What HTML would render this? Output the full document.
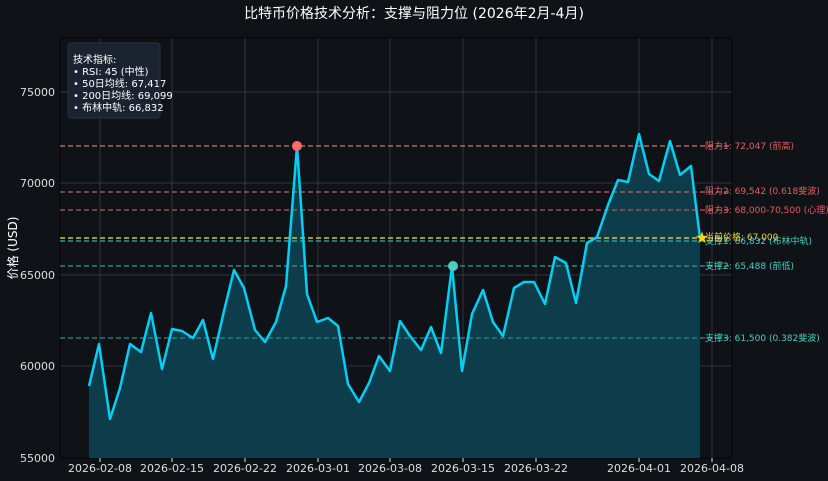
<!DOCTYPE html>
<html><head><meta charset="utf-8"><style>
html,body{margin:0;padding:0;background:#0f1317;}
svg{display:block;font-family:"DejaVu Sans","Noto Sans CJK SC",sans-serif;}
</style></head><body>
<svg width="828" height="481" viewBox="0 0 828 481" xmlns="http://www.w3.org/2000/svg">
<rect width="828" height="481" fill="#0f1317"/>
<text x="414" y="18" fill="#fff" font-size="14" text-anchor="middle">比特币价格技术分析：支撑与阻力位 (2026年2月-4月)</text>
<rect x="60" y="38" width="672" height="420" fill="#0f1317" stroke="#000" stroke-width="1"/>
<g stroke="#3a4045" stroke-width="0.8">
<line x1="100" y1="38" x2="100" y2="458"/><line x1="172" y1="38" x2="172" y2="458"/><line x1="245" y1="38" x2="245" y2="458"/><line x1="318" y1="38" x2="318" y2="458"/><line x1="390" y1="38" x2="390" y2="458"/><line x1="463" y1="38" x2="463" y2="458"/><line x1="536" y1="38" x2="536" y2="458"/><line x1="639" y1="38" x2="639" y2="458"/><line x1="712" y1="38" x2="712" y2="458"/>
<line x1="60" y1="92" x2="732" y2="92"/><line x1="60" y1="183" x2="732" y2="183"/><line x1="60" y1="275" x2="732" y2="275"/><line x1="60" y1="366" x2="732" y2="366"/>
</g>
<polygon fill="#0d3d4a" points="89,458 89,386 99,344 110,419 120,388 130,344 141,352 151,313 162,369 172,329 182,331 193,338 203,320 213,359 224,311 234,270 244,288 255,330 265,342 276,322 286,286 297,146 307,294 317,322 328,318 338,326 348,384 359,402 369,383 379,356 390,371 400,321 410,336 421,350 431,327 441,353 452,266 462,371 472,314 483,290 493,322 503,336 514,288 524,282 534,282 545,304 555,257 566,263 576,303 587,243 597,237 608,205 618,180 628,182 639,134 649,174 659,181 670,141 680,175 691,166 700,238 700,458"/>
<g stroke-dasharray="5,3" stroke-width="1.3">
<line x1="60" y1="146" x2="732" y2="146" stroke="#e07070"/>
<line x1="60" y1="192" x2="732" y2="192" stroke="#c86060"/>
<line x1="60" y1="210" x2="732" y2="210" stroke="#c85050"/>
<line x1="60" y1="238" x2="732" y2="238" stroke="#f0e060"/>
<line x1="60" y1="241" x2="732" y2="241" stroke="#4aa"/>
<line x1="60" y1="266" x2="732" y2="266" stroke="#3a9a90"/>
<line x1="60" y1="338" x2="732" y2="338" stroke="#2f8a90"/>
</g>
<polyline fill="none" stroke="#00d0f5" stroke-width="2.5" stroke-linejoin="round" points="89,386 99,344 110,419 120,388 130,344 141,352 151,313 162,369 172,329 182,331 193,338 203,320 213,359 224,311 234,270 244,288 255,330 265,342 276,322 286,286 297,146 307,294 317,322 328,318 338,326 348,384 359,402 369,383 379,356 390,371 400,321 410,336 421,350 431,327 441,353 452,266 462,371 472,314 483,290 493,322 503,336 514,288 524,282 534,282 545,304 555,257 566,263 576,303 587,243 597,237 608,205 618,180 628,182 639,134 649,174 659,181 670,141 680,175 691,166 700,238"/>
<circle cx="297" cy="146" r="5" fill="#ff6b6b"/>
<circle cx="453" cy="266" r="5" fill="#4ecdc4"/>
<text x="702" y="243" fill="#ffd700" font-size="16" text-anchor="middle">★</text>
<g font-size="9">
<text x="705" y="149" fill="#e06060">阻力1: 72,047 (前高)</text>
<text x="705" y="194" fill="#e06060">阻力2: 69,542 (0.618斐波)</text>
<text x="705" y="213" fill="#e06060">阻力3: 68,000-70,500 (心理)</text>
<text x="705" y="244" fill="#4ecdc4">支撑1: 66,832 (布林中轨)</text>
<text x="705" y="240" fill="#e8d040">当前价格: 67,000</text>
<text x="705" y="269" fill="#4ecdc4">支撑2: 65,488 (前低)</text>
<text x="705" y="341" fill="#4ecdc4">支撑3: 61,500 (0.382斐波)</text>
</g>
<rect x="68" y="43" width="92" height="75" rx="3" fill="#1b2230" stroke="#2a3140"/>
<g font-size="10" fill="#fff">
<text x="73" y="63">技术指标:</text>
<text x="73" y="75">• RSI: 45 (中性)</text>
<text x="73" y="87">• 50日均线: 67,417</text>
<text x="73" y="99">• 200日均线: 69,099</text>
<text x="73" y="111">• 布林中轨: 66,832</text>
</g>
<g font-size="11" fill="#ddd" text-anchor="end">
<text x="55" y="96">75000</text><text x="55" y="187">70000</text><text x="55" y="279">65000</text><text x="55" y="370">60000</text><text x="55" y="462">55000</text>
</g>
<g stroke="#ddd"><line x1="100" y1="458" x2="100" y2="462"/><line x1="172" y1="458" x2="172" y2="462"/><line x1="245" y1="458" x2="245" y2="462"/><line x1="318" y1="458" x2="318" y2="462"/><line x1="390" y1="458" x2="390" y2="462"/><line x1="463" y1="458" x2="463" y2="462"/><line x1="536" y1="458" x2="536" y2="462"/><line x1="639" y1="458" x2="639" y2="462"/><line x1="712" y1="458" x2="712" y2="462"/></g>
<g font-size="11" fill="#ddd" text-anchor="middle">
<text x="100" y="472">2026-02-08</text><text x="172" y="472">2026-02-15</text><text x="245" y="472">2026-02-22</text><text x="318" y="472">2026-03-01</text><text x="390" y="472">2026-03-08</text><text x="463" y="472">2026-03-15</text><text x="536" y="472">2026-03-22</text><text x="639" y="472">2026-04-01</text><text x="712" y="472">2026-04-08</text>
</g>
<text transform="translate(17,248) rotate(-90)" fill="#fff" font-size="12" text-anchor="middle">价格 (USD)</text>
</svg>
</body></html>
